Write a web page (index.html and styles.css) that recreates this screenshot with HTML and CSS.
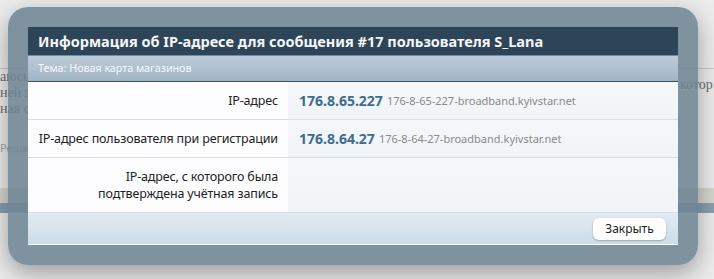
FILE: index.html
```html
<!DOCTYPE html>
<html lang="ru">
<head>
<meta charset="utf-8">
<title>IP</title>
<link rel="stylesheet" href="styles.css">
</head>
<body>
<div class="page">
  <div class="post-line"></div>
  <div class="post">
    <div class="post-left">
      <div class="bg-text">аюсь</div>
      <div class="bg-text">ней э</div>
      <div class="bg-text">ная с</div>
      <div class="bg-edit">Редак</div>
    </div>
    <div class="post-right">
      <div class="bg-text">котор</div>
    </div>
  </div>
  <div class="band-light"></div>
  <div class="band-blue"></div>
</div>

<div class="overlay">
  <div class="dialog">
    <div class="dlg-title">Информация об IP-адресе для сообщения #17 пользователя S_Lana</div>
    <div class="dlg-sub">Тема: Новая карта магазинов</div>
    <div class="rows">
      <div class="row row-short">
        <div class="label">IP-адрес</div>
        <div class="value"><span class="ip">176.8.65.227</span> <span class="host">176-8-65-227-broadband.kyivstar.net</span></div>
      </div>
      <div class="row row-short">
        <div class="label">IP-адрес пользователя при регистрации</div>
        <div class="value"><span class="ip">176.8.64.27</span> <span class="host">176-8-64-27-broadband.kyivstar.net</span></div>
      </div>
      <div class="row row-tall">
        <div class="label">IP-адрес, с которого была<br>подтверждена учётная запись</div>
        <div class="value"></div>
      </div>
    </div>
    <div class="dlg-foot">
      <button class="btn">Закрыть</button>
    </div>
  </div>
</div>
</body>
</html>
```
FILE: styles.css
```css
html, body {
  margin: 0;
  padding: 0;
}
body {
  width: 714px;
  height: 279px;
  overflow: hidden;
  position: relative;
  background: #ececec;
  font-family: "Noto Sans", "DejaVu Sans", sans-serif;
}
.page {
  padding-top: 68px;
}
.post-line {
  height: 1px;
  background: #c9c9c9;
}
.post {
  display: flex;
  justify-content: space-between;
  height: 119px;
}
.post-left {
  width: 30px;
}
.bg-text {
  font-family: "Liberation Serif", "DejaVu Serif", serif;
  font-size: 14px;
  line-height: 16px;
  color: #6d6d6d;
  white-space: nowrap;
}
.post-right {
  padding-top: 8px;
  width: 34px;
}
.bg-edit {
  margin-top: 23px;
  font-size: 11px;
  color: #9aa6b0;
  white-space: nowrap;
}
.band-light {
  height: 15px;
  background: #d6d6cf;
}
.band-blue {
  height: 10px;
  background: #8aa0b1;
}
.overlay {
  position: absolute;
  left: 8px;
  top: 7px;
  width: 650px;
  padding: 20px;
  border-radius: 20px;
  background: rgba(107, 130, 145, 0.86);
  box-shadow: 0 8px 24px rgba(0, 0, 0, 0.35);
}
.dialog {
  background: #f3f6f8;
  border-bottom: 1px solid #ffffff;
}
.dlg-title {
  height: 28px;
  line-height: 28px;
  padding-left: 10px;
  background: #2e4457;
  border-bottom: 1px solid #6d8ead;
  color: #f4f6f8;
  font-size: 14.5px;
  font-weight: bold;
  white-space: nowrap;
}
.dlg-sub {
  height: 25px;
  line-height: 25px;
  padding-left: 10px;
  background: linear-gradient(#bccbd8, #a2b5c5);
  border-bottom: 1px solid #3b5468;
  color: #f7f9fb;
  font-size: 10.7px;
}
.row {
  display: grid;
  grid-template-columns: 260px 1fr;
  border-bottom: 1px solid #d6dfe7;
}
.row-short {
  height: 37px;
}
.row-tall {
  height: 54px;
}
.label {
  background: #fdfdff;
  text-align: right;
  padding-right: 10px;
  font-size: 12.5px;
  letter-spacing: -0.15px;
  line-height: 17px;
  color: #222222;
  white-space: nowrap;
  display: flex;
  align-items: center;
  justify-content: flex-end;
}
.value {
  background: linear-gradient(#f5f8fa, #f1f4f7);
  padding-left: 11px;
  display: flex;
  align-items: center;
  white-space: nowrap;
}
.ip {
  font-size: 14px;
  font-weight: bold;
  color: #3e6b90;
  margin-right: 4px;
}
.host {
  font-size: 11px;
  color: #8a8a8a;
}
.dlg-foot {
  height: 31px;
  background: linear-gradient(#e2eaf2, #ccdcea);
  display: flex;
  justify-content: flex-end;
  align-items: center;
  padding-right: 12px;
}
.btn {
  width: 73px;
  height: 22px;
  border: none;
  border-radius: 6px;
  background: #ffffff;
  box-shadow: 0 1px 2px rgba(0, 0, 0, 0.25);
  font-family: "Noto Sans", "DejaVu Sans", sans-serif;
  font-size: 12px;
  color: #222222;
  padding: 0;
}
```
